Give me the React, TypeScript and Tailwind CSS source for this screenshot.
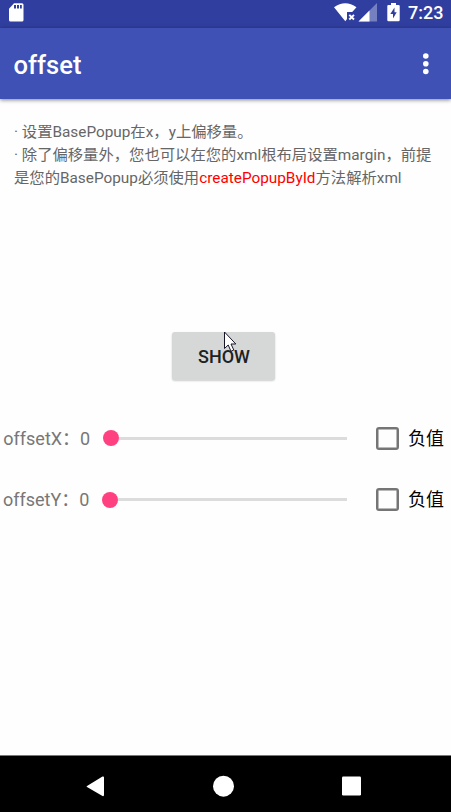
import React from 'react';

function StatusBar() {
  return (
    <div className="flex h-[28px] items-start bg-[#303f9f] text-white">
      <svg className="ml-[8px] mt-[3px] h-[19px] w-[16px]" viewBox="0 0 16 19" fill="#fff">
        <path
          fillRule="evenodd"
          d="M6 0.200H14Q15.500 0.200 15.500 1.700V17Q15.500 18.500 14 18.500H2.500Q1 18.500 1 17V5.700ZM6 2V5.500H8V2ZM9 2V5.500H11V2ZM12 2V5.500H13.800V2Z"
        />
      </svg>
      <svg className="ml-[309px] mt-[3px] h-[19px] w-[24px]" viewBox="0 0 24 19">
        <path d="M1 4.200Q12.300 -3.800 23.500 4.200L19.200 9H14V16L12.300 18.300Z" fill="#fff" />
        <path d="M16.300 11.800L21 16.500M21 11.800L16.300 16.500" stroke="#fff" strokeWidth="1.900" />
      </svg>
      <svg className="ml-px mt-[3px] h-[19px] w-[19px]" viewBox="0 0 19 19">
        <path d="M19 0V18.500H0.500Z" fill="#7580c1" />
        <path d="M11.500 7.500V18.500H0.500Z" fill="#fff" />
      </svg>
      <svg className="ml-[10px] mt-[3px] h-[19px] w-[13px]" viewBox="0 0 13 19">
        <path
          fillRule="evenodd"
          fill="#fff"
          d="M4 0H9V2H11.500Q12.700 2 12.700 3V17Q12.700 18.300 11.500 18.300H1.500Q0.300 18.300 0.300 17V3Q0.300 2 1.500 2H4ZM7.500 4.500L3.300 11H6V15.500L9.700 9.200H7.500Z"
        />
      </svg>
      <span className="ml-[8px] mt-[2px] text-[18px] font-medium leading-[22px]">7:23</span>
    </div>
  );
}

function OffsetRow({ label, gap, text }: { label: string; gap: string; text: string }) {
  return (
    <div className="flex h-[30px] items-center">
      <span className={`w-[87px] whitespace-nowrap text-[18px] leading-[30px] text-[#777] ${text}`}>
        {label}：0
      </span>
      <div className={`flex items-center ${gap}`}>
        <span className="h-[16px] w-[16px] shrink-0 rounded-full bg-[#ff4081]" />
        <span className="h-[3px] flex-1 bg-[#dcdcdc]" />
      </div>
      <div className="ml-auto mr-[7px] flex items-center">
        <span className="mr-[9px] h-[23px] w-[23px] rounded-[3px] border-2 border-[#757575] shadow-[inset_0_0_0_0.5px_#757575]" />
        <span className="pt-px text-[18px] leading-[30px] text-black">负值</span>
      </div>
    </div>
  );
}

export default function App() {
  return (
    <div className="relative flex h-[812px] w-[451px] flex-col overflow-hidden bg-[#fefefe] font-['Roboto','Noto_Sans_CJK_SC',sans-serif]">
      <StatusBar />
      <header className="flex h-[71px] shrink-0 items-center bg-[#3f51b5] text-white shadow-[0_1px_4px_rgba(0,0,0,0.5)]">
        <h1 className="ml-[13.500px] mt-[3px] text-[25.600px] font-medium leading-[32px]">offset</h1>
        <svg className="ml-auto mr-[22px] h-[22px] w-[7px]" viewBox="0 0 7 22" fill="#fff">
          <circle cx="3.800" cy="3" r="2.800" />
          <circle cx="3.800" cy="10.700" r="2.800" />
          <circle cx="3.800" cy="18.500" r="2.800" />
        </svg>
      </header>
      <main className="flex flex-1 flex-col">
        <p className="ml-[14px] mt-[22px] whitespace-nowrap text-[15.330px] leading-[23px] text-[#666]">
          · 设置BasePopup在x，y上偏移量。
          <br />
          · 除了偏移量外，您也可以在您的xml根布局设置margin，前提
          <br />
          是您的BasePopup必须使用<span className="text-[#ff0000]">createPopupById</span>方法解析xml
        </p>
        <button className="ml-[172px] mt-[142px] h-[48px] w-[103px] rounded-[3px] bg-[#d6d7d7] pl-px text-[18px] font-medium text-[#212121] shadow-[0_1px_2px_rgba(0,0,0,0.2)]">
          SHOW
        </button>
        <div className="mt-[43px] flex flex-col gap-[31.500px]">
          <OffsetRow label="offsetX" gap="ml-[13px] w-[244px]" text="ml-[3.300px] pt-px" />
          <OffsetRow label="offsetY" gap="ml-[12px] w-[245px]" text="ml-[3px]" />
        </div>
      </main>
      <nav className="h-[57px] border-t border-[#777] bg-black">
        <svg className="h-[56px] w-[451px]" viewBox="0 0 451 56" fill="#fff">
          <path d="M87 30L102.500 20.500Q104 20 104 21.500V39Q104 40.500 102.500 40L87 31Q86 30.500 87 30Z" />
          <circle cx="223.500" cy="30.200" r="10.500" />
          <rect x="342" y="20.500" width="19" height="19" rx="1.200" />
        </svg>
      </nav>
      <svg className="absolute left-[223px] top-[331px] h-[22px] w-[14px]" viewBox="0 0 14 22">
        <path
          d="M1.500 1V17.500L5.200 14L8 20.300L10.800 19L8 13H12.800Z"
          fill="#fff"
          stroke="#15152a"
          strokeWidth="1"
        />
      </svg>
    </div>
  );
}
